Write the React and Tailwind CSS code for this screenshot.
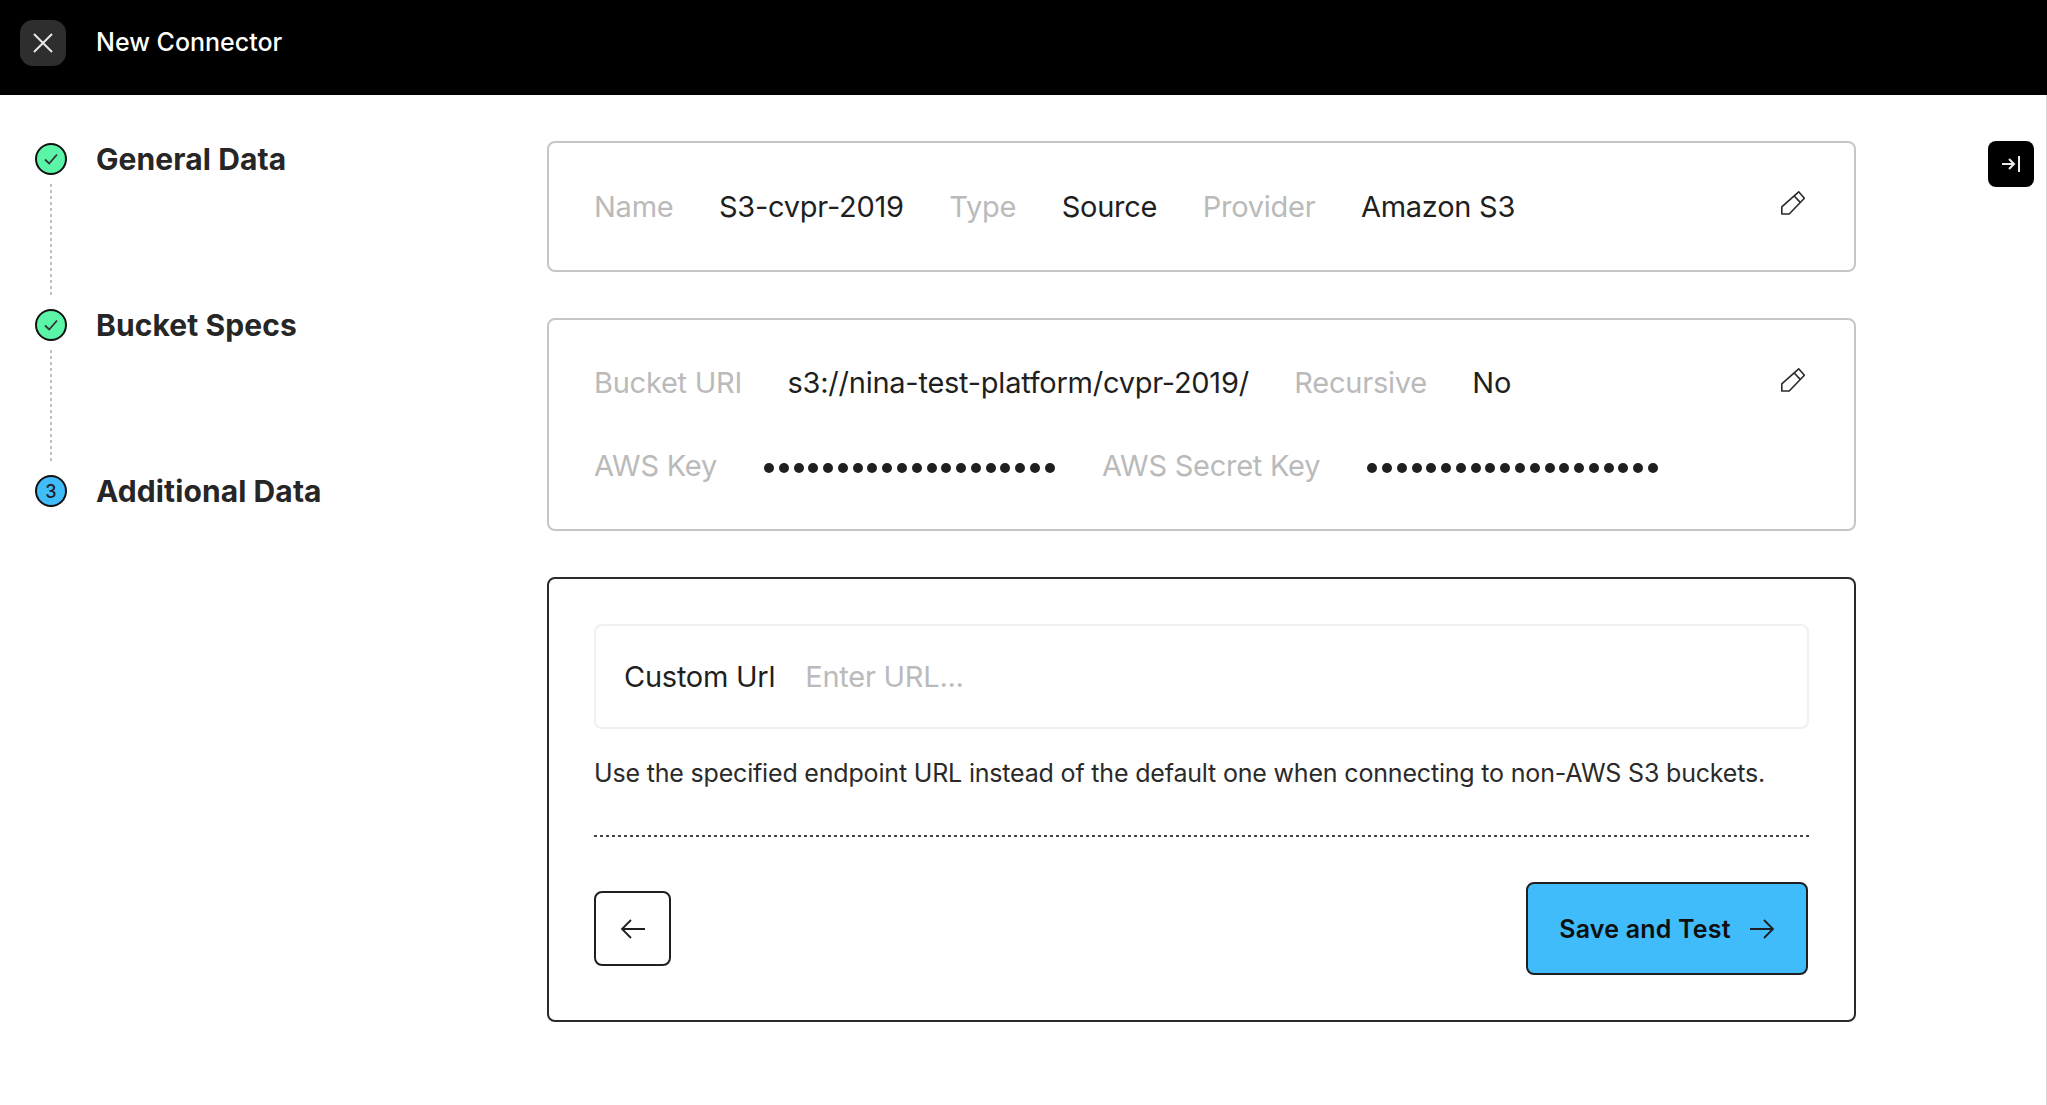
import React from 'react';

const steps = [
  { label: 'General Data', done: true },
  { label: 'Bucket Specs', done: true },
  { label: 'Additional Data', done: false },
];

const Dots = () => (
  <div className="flex w-[291px] justify-between pt-[3px]">
    {Array.from({ length: 20 }).map((_, i) => (
      <span key={i} className="h-[10px] w-[10px] rounded-full bg-[#1f1f1f]" />
    ))}
  </div>
);

const Pencil = () => (
  <svg className="mb-[7px]" width="24" height="24" viewBox="0 0 24 24" fill="none" stroke="#2a2a2a" strokeWidth="1.6" strokeLinejoin="round">
    <path d="M17.7 0.8 L23.4 7.2 L8.2 23 L0.8 23 L0.8 15.8 Z" />
    <path d="M13 4.8 L19.2 11.4" />
  </svg>
);

const Field = ({ label, value }) => (
  <>
    <span className="text-[#bababa]">{label}</span>
    <span className="text-[#1f1f1f]">{value}</span>
  </>
);

const Step = ({ step, last }) => (
  <div className={last ? 'flex gap-[29px]' : 'flex h-[166px] gap-[29px]'}>
    <div className="flex w-[32px] flex-col items-center">
      <span
        className={`flex h-[32px] w-[32px] shrink-0 items-center justify-center rounded-full border-2 border-[#111] text-[18px] font-medium text-[#1f1f1f] ${
          step.done ? 'bg-[#5bf5a8]' : 'bg-[#40bcfb]'
        }`}
      >
        {step.done ? (
          <svg width="18" height="18" viewBox="0 0 18 18" fill="none" stroke="#333" strokeWidth="1.8">
            <path d="M3 9.5 L7.2 13.5 L15 4.5" />
          </svg>
        ) : (
          '3'
        )}
      </span>
      {!last && (
        <div className="mt-[9px] mb-[14px] w-[2px] flex-1 bg-[repeating-linear-gradient(180deg,#c0c0c0_0_3px,transparent_3px_6px)]" />
      )}
    </div>
    <span className="text-[30px] leading-[32px] font-bold tracking-[0.1px] text-[#262626]">{step.label}</span>
  </div>
);

export default function App() {
  return (
    <div className="flex min-h-[1105px] flex-col bg-white font-['Inter',sans-serif]">
      <header className="flex h-[95px] items-center gap-[30px] bg-black pb-[10px] pl-[20px]">
        <button className="flex h-[46px] w-[46px] items-center justify-center rounded-[13px] bg-[#2e2e2e]">
          <svg width="22" height="22" viewBox="0 0 22 22" fill="none" stroke="#e8e8e8" strokeWidth="2">
            <path d="M2 2 L20 20 M20 2 L2 20" />
          </svg>
        </button>
        <span className="text-[25px] font-medium text-white">New Connector</span>
      </header>

      <main className="flex flex-1 border-r border-[#d8d8d8]">
        <aside className="w-[547px] shrink-0 pt-[48px] pl-[35px]">
          {steps.map((step, i) => (
            <Step key={step.label} step={step} last={i === steps.length - 1} />
          ))}
        </aside>

        <section className="flex w-[1309px] shrink-0 flex-col gap-[46px] pt-[46px] text-[29px] leading-[36px] tracking-[-0.25px]">
          <div className="flex h-[131px] items-center justify-between rounded-[8px] border-2 border-[#c6c6c6] pr-[49px] pl-[45px]">
            <div className="flex gap-[45.5px]">
              <Field label="Name" value="S3-cvpr-2019" />
              <Field label="Type" value="Source" />
              <Field label="Provider" value="Amazon S3" />
            </div>
            <Pencil />
          </div>

          <div className="flex h-[213px] flex-col justify-center gap-[47px] rounded-[8px] border-2 border-[#c6c6c6] pr-[49px] pl-[45px]">
            <div className="flex items-center justify-between">
              <div className="flex gap-[45.5px]">
                <Field label="Bucket URI" value="s3://nina-test-platform/cvpr-2019/" />
                <Field label="Recursive" value="No" />
              </div>
              <Pencil />
            </div>
            <div className="flex items-center gap-[47px]">
              <span className="text-[#bababa]">AWS Key</span>
              <Dots />
              <span className="text-[#bababa]">AWS Secret Key</span>
              <Dots />
            </div>
          </div>

          <div className="flex h-[445px] flex-col rounded-[8px] border-2 border-[#2a2a2a] p-[45px]">
            <div className="flex h-[105px] shrink-0 items-center gap-[30px] rounded-[8px] border-2 border-[#f0f0f0] px-[28px]">
              <span className="text-[#1f1f1f]">Custom Url</span>
              <span className="text-[#bababa]">Enter URL...</span>
            </div>
            <p className="mt-[26px] text-[25px] leading-[36px] tracking-[-0.18px] text-[#2a2a2a]">
              Use the specified endpoint URL instead of the default one when connecting to non-AWS S3 buckets.
            </p>
            <div className="mt-[44px] h-[2px] bg-[repeating-linear-gradient(90deg,#444_0_3px,transparent_3px_6px)]" />
            <div className="mt-[45px] flex items-center justify-between">
              <button className="flex h-[75px] w-[77px] items-center justify-center rounded-[8px] border-2 border-[#1f1f1f]">
                <svg width="26" height="22" viewBox="0 0 26 22" fill="none" stroke="#1f1f1f" strokeWidth="1.8">
                  <path d="M25 11 L2 11 M11 2 L2 11 L11 20" />
                </svg>
              </button>
              <button className="mr-[1px] flex h-[93px] w-[282px] items-center justify-center gap-[19px] rounded-[8px] border-2 border-[#1f1f1f] bg-[#40bcfb] text-[25px] font-semibold tracking-[0.2px] text-[#0f0f0f]">
                Save and Test
                <svg width="25" height="22" viewBox="0 0 25 22" fill="none" stroke="#1f1f1f" strokeWidth="1.8">
                  <path d="M0 11 L23 11 M14 2 L23 11 L14 20" />
                </svg>
              </button>
            </div>
          </div>
        </section>

        <div className="flex flex-1 justify-end pt-[46px] pr-[12px]">
          <button className="flex h-[46px] w-[46px] items-center justify-center rounded-[8px] bg-black">
            <svg width="20" height="18" viewBox="0 0 20 18" fill="none" stroke="#ececec" strokeWidth="2">
              <path d="M1 9 L13 9 M8 4 L13 9 L8 14 M18 1 L18 17" />
            </svg>
          </button>
        </div>
      </main>
    </div>
  );
}
